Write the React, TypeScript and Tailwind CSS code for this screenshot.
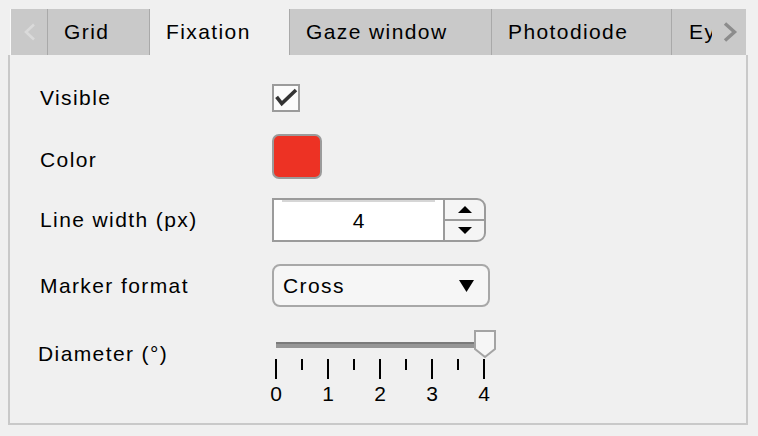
import React from "react";

function Tab({ label, className, active }: { label: string; className: string; active?: boolean }) {
  return (
    <div
      className={`${className} flex items-center pl-4 border-r border-[#a9a9a9] whitespace-nowrap overflow-hidden ${
        active ? "bg-[#f0f0f0]" : ""
      }`}
    >
      {label}
    </div>
  );
}

export default function App() {
  const ticks = [0, 1, 2, 3, 4];
  return (
    <div className="w-[758px] h-[436px] bg-[#f0f0f0] pt-[9px] pl-[8px] text-[21px] leading-[24px] tracking-[1.4px] text-black font-['Liberation_Sans',Arial,sans-serif]">
      <div className="w-[740px] h-[416px] flex flex-col">
        {/* Tab strip */}
        <div className="mx-[2px] h-[46px] shrink-0 flex bg-[#c9c9c9]">
          <div className="w-[38px] flex items-center pl-[12px] border-l border-l-[#fafafa] border-r border-r-[#a9a9a9]">
            <svg width="13" height="18" viewBox="0 0 13 18">
              <path d="M11 1.5 L3 9 L11 16.5" stroke="#dadada" strokeWidth="2.6" fill="none" />
            </svg>
          </div>
          <Tab className="w-[102px]" label="Grid" />
          <Tab className="w-[140px]" label="Fixation" active />
          <Tab className="w-[202px]" label="Gaze window" />
          <Tab className="w-[180px]" label="Photodiode" />
          <div className="w-[40px] flex items-center pl-[17px] whitespace-nowrap overflow-hidden">Eye</div>
          <div className="w-[34px] flex items-center pl-[10px]">
            <svg width="16" height="20" viewBox="0 0 16 20">
              <path d="M3 1.5 L12.5 10 L3 18.5" stroke="#8c8c8c" strokeWidth="3.4" fill="none" />
            </svg>
          </div>
        </div>

        {/* Panel content */}
        <div className="flex-1 border-2 border-t-0 border-[#c9c9c9] pl-[30px] flex flex-col">
          {/* Visible */}
          <div className="mt-[29px] h-[28px] flex items-center">
            <div className="w-[232px]">Visible</div>
            <div className="w-[28px] h-[28px] border-2 border-[#9b9b9b] bg-[#fbfbfb]">
              <svg viewBox="0 0 24 24" className="w-full h-full">
                <path d="M2.6 10.8 L7.8 17.6 L22 4" stroke="#333" strokeWidth="3.6" fill="none" />
              </svg>
            </div>
          </div>

          {/* Color */}
          <div className="mt-[22px] h-[45px] flex items-center">
            <div className="w-[232px] mt-[7px]">Color</div>
            <div className="w-[50px] h-[45px] rounded-[7px] border-2 border-[#9b9b9b] bg-[#ed3224]" />
          </div>

          {/* Line width */}
          <div className="mt-[19px] h-[44px] flex items-center">
            <div className="w-[232px]">Line width (px)</div>
            <div className="flex h-[44px] w-[214px]">
              <div className="w-[171px] border-2 border-r-0 border-[#9b9b9b] bg-white flex flex-col">
                <div className="mx-[8px] h-[2px] bg-[#d6d6d6]" />
                <div className="flex-1 flex items-center justify-center tracking-normal">4</div>
              </div>
              <div className="w-[43px] border-2 border-[#9b9b9b] rounded-r-[9px] bg-[#f5f5f5] flex flex-col overflow-hidden">
                <div className="flex-1 flex items-center justify-center border-b-2 border-[#9b9b9b]">
                  <svg width="14" height="7" viewBox="0 0 14 7">
                    <path d="M0 7 L7 0 L14 7 Z" fill="#000" />
                  </svg>
                </div>
                <div className="flex-1 flex items-center justify-center">
                  <svg width="14" height="7" viewBox="0 0 14 7">
                    <path d="M0 0 L14 0 L7 7 Z" fill="#000" />
                  </svg>
                </div>
              </div>
            </div>
          </div>

          {/* Marker format */}
          <div className="mt-[22px] h-[43px] flex items-center">
            <div className="w-[232px]">Marker format</div>
            <div className="w-[218px] h-[43px] rounded-[8px] border-2 border-[#a8a8a8] bg-[#f6f6f6] flex items-center justify-between pl-[9px] pr-[14px]">
              <span>Cross</span>
              <svg width="15" height="12" viewBox="0 0 15 12">
                <path d="M0 0 L15 0 L7.5 12 Z" fill="#000" />
              </svg>
            </div>
          </div>

          {/* Diameter */}
          <div className="mt-[23px] flex">
            <div className="w-[234px] ml-[-2px] mt-[12px]">Diameter (°)</div>
            <div className="w-[228px] flex flex-col">
              <div className="relative h-[29px]">
                <div className="ml-[4px] w-[208px] mt-[12px] h-[6px] bg-[#969696] border-t-2 border-[#7a7a7a]" />
                <svg className="absolute left-[202px] top-0" width="22" height="28" viewBox="0 0 22 28">
                  <path d="M1 1 L21 1 L21 19 L11 27 L1 19 Z" fill="#f6f6f6" stroke="#a4a4a4" strokeWidth="2" />
                </svg>
              </div>
              <svg width="228" height="20" viewBox="0 0 228 20">
                {ticks.map((n) => (
                  <line key={`M${n}`} x1={4 + 52 * n} x2={4 + 52 * n} y1="0" y2="20" stroke="#000" strokeWidth="2" />
                ))}
                {[0, 1, 2, 3].map((n) => (
                  <line key={`m${n}`} x1={30 + 52 * n} x2={30 + 52 * n} y1="0" y2="11" stroke="#000" strokeWidth="2" />
                ))}
              </svg>
              <div className="flex gap-[32px] ml-[-6px] mt-[3px] tracking-normal">
                {ticks.map((n) => (
                  <div key={n} className="w-[20px] text-center">
                    {n}
                  </div>
                ))}
              </div>
            </div>
          </div>
        </div>
      </div>
    </div>
  );
}
